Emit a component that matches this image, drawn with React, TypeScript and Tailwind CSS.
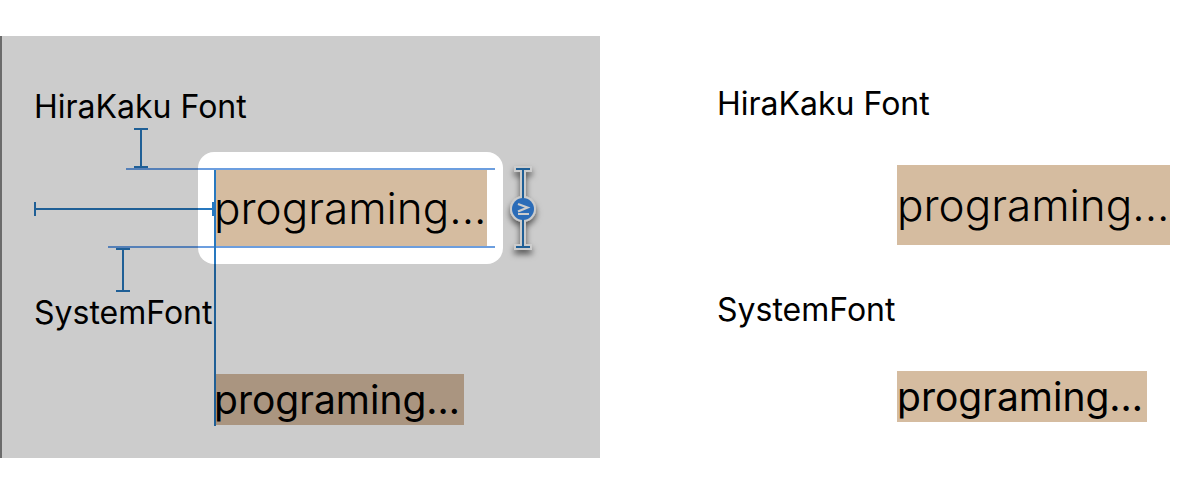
type SampleProps = {
  selected?: boolean;
};

function FontSamples({ selected = false }: SampleProps) {
  return (
    <div className="flex flex-col items-start whitespace-nowrap text-black">
      <h2 className="text-[32px] leading-[42px] font-normal">HiraKaku Font</h2>
      <div
        className={
          selected
            ? "mt-6 mb-7 ml-[164px] rounded-2xl bg-white p-4"
            : "mt-6 mb-7 ml-[164px] p-4"
        }
      >
        <p className="flex h-20 w-[273px] items-center bg-[#d5bca0] text-[44px] leading-[56px] font-light">
          programing...
        </p>
      </div>
      <h2 className="text-[32px] leading-[42px] font-normal">SystemFont</h2>
      <p
        className={
          selected
            ? "mt-10 ml-[180px] w-[250px] bg-[#aa9580] text-[39px] leading-[51px]"
            : "mt-10 ml-[180px] w-[250px] bg-[#d5bca0] text-[39px] leading-[51px]"
        }
      >
        programing…
      </p>
    </div>
  );
}

function ConstraintGuides() {
  return (
    <svg
      className="pointer-events-none absolute top-0 left-0"
      width="600"
      height="422"
      viewBox="0 36 600 422"
      fill="none"
      aria-hidden="true"
    >
      <defs>
        <filter id="handle-shadow" x="-100%" y="-20%" width="300%" height="150%">
          <feDropShadow dx="0" dy="4" stdDeviation="3" floodColor="#000" floodOpacity="0.6" />
        </filter>
      </defs>

      {/* top and bottom edge guides */}
      <path d="M126 169H198M108 247H198" stroke="#5580b8" strokeWidth="2" />
      <path d="M198 169H495M198 247H495" stroke="#6c9edf" strokeWidth="2" />

      {/* spacing to the labels */}
      <path
        d="M134 129H148M141 129V167M134 167H148M116 249H130M123 249V291M116 291H130"
        stroke="#1f5f96"
        strokeWidth="2"
      />

      {/* leading distance and leading edge */}
      <path d="M35 202V216M35 209H198M215 264V426" stroke="#1f5f96" strokeWidth="2" />
      <path d="M198 209H214M213 202V216M215 170V264" stroke="#2878bf" strokeWidth="2" />

      {/* minimum height handle */}
      <g filter="url(#handle-shadow)">
        <path d="M514 169H532M514 247H532" stroke="#cccccc" strokeWidth="6" />
        <path d="M523 168V248" stroke="#cccccc" strokeWidth="6" />
        <circle cx="523" cy="209" r="13" fill="#cccccc" />
      </g>
      <path d="M516 169H530M516 247H530M523 169V247" stroke="#1f5f96" strokeWidth="2" />
      <circle cx="523" cy="209" r="11" fill="#2b6cb8" />
      <path d="M518 204L527.5 207.5L518 211.5M518 214H529" stroke="#cccccc" strokeWidth="2.2" />
    </svg>
  );
}

export default function App() {
  return (
    <main className="grid grid-cols-2 items-start bg-white py-9 font-['Inter','Liberation_Sans',sans-serif]">
      <section className="relative border-l-2 border-[#6b6b6b] bg-[#cccccc] pt-[50px] pb-[33px] pl-8">
        <FontSamples selected />
        <div className="absolute top-0 -left-0.5">
          <ConstraintGuides />
        </div>
      </section>
      <section className="pt-[47px] pl-[117px]">
        <FontSamples />
      </section>
    </main>
  );
}
